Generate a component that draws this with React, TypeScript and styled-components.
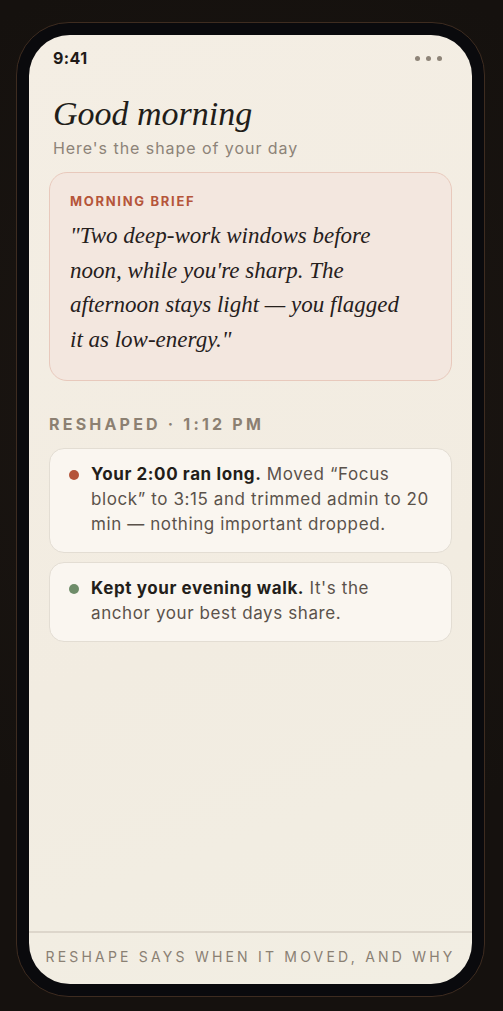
import styled, { createGlobalStyle } from 'styled-components';

const GlobalStyle = createGlobalStyle`
  html, body {
    margin: 0;
    padding: 0;
    background: radial-gradient(circle at 50% 40%, #1c1612 0%, #15110e 70%);
    min-height: 100%;
  }
  body {
    font-family: Inter, "Noto Sans", sans-serif;
  }
`

const Page = styled.div`
  padding: 22px 0 0 16px;
  min-height: 1011px;
  box-sizing: border-box;
`

const Phone = styled.div`
  width: 469px;
  height: 975px;
  box-sizing: border-box;
  padding: 12px;
  border-radius: 53px;
  border: 1px solid #3e2c20;
  background: #0a0a0d;
`

const Screen = styled.div`
  height: 100%;
  border-radius: 41px;
  overflow: hidden;
  background: linear-gradient(160deg, #f4eee4 0%, #f2ece1 60%, #f2eee3 100%);
  display: flex;
  flex-direction: column;
`

const StatusBar = styled.div`
  display: flex;
  justify-content: space-between;
  align-items: center;
  padding: 11px 30px 0 24px;
  height: 24px;
`

const Clock = styled.span`
  font-size: 16px;
  font-weight: 700;
  color: #1e1a17;
  letter-spacing: 0.4px;
`

const Dots = styled.div`
  display: flex;
  gap: 6px;
  span {
    width: 5px;
    height: 5px;
    border-radius: 50%;
    background: #8e8478;
  }
`

const Content = styled.div`
  flex: 1;
  padding: 0 20px;
  display: flex;
  flex-direction: column;
`

const Greeting = styled.h1`
  margin: 24px 0 0 4px;
  font-family: "Liberation Serif", "DejaVu Serif", serif;
  font-style: italic;
  font-weight: 400;
  font-size: 34px;
  line-height: 40px;
  color: #221d19;
`

const Subtitle = styled.p`
  margin: 4px 0 0 4px;
  font-size: 16px;
  line-height: 20px;
  letter-spacing: 0.95px;
  color: #8d8378;
`

const BriefCard = styled.section`
  margin-top: 14px;
  padding: 19px 20px 23px;
  border-radius: 18px;
  border: 1.5px solid #e8c9bc;
  background: #f3e7df;
`

const Eyebrow = styled.div<{ $tone: string }>`
  font-size: 13px;
  font-weight: 700;
  letter-spacing: 1.7px;
  line-height: 18px;
  text-transform: uppercase;
  color: ${props => props.$tone};
`

const Quote = styled.p`
  margin: 9px 0 0;
  font-family: "Liberation Serif", "DejaVu Serif", serif;
  font-style: italic;
  font-size: 23px;
  line-height: 34.5px;
  color: #26201c;
`

const SectionLabel = styled(Eyebrow)`
  margin: 33px 0 0;
  font-size: 16px;
  line-height: 20px;
  letter-spacing: 3.2px;
`

const Notes = styled.div`
  margin-top: 14px;
  display: flex;
  flex-direction: column;
  gap: 9px;
`

const Note = styled.div`
  display: flex;
  gap: 12px;
  padding: 13px 18px 15px 19px;
  border-radius: 15px;
  border: 1.5px solid #e3ddd3;
  background: #faf6f0;
`

const Dot = styled.span<{ $color: string }>`
  flex: none;
  width: 10px;
  height: 10px;
  margin-top: 8px;
  border-radius: 50%;
  background: ${props => props.$color};
`

const NoteText = styled.p`
  margin: 0;
  font-size: 17px;
  line-height: 25px;
  letter-spacing: 0.6px;
  color: #5a524b;
  b {
    font-weight: 700;
    color: #231e1a;
  }
`

const Footer = styled.footer`
  border-top: 2px solid #ddd6cb;
  padding: 15px 0 19px;
  text-align: center;
  font-size: 14px;
  letter-spacing: 3.2px;
  text-transform: uppercase;
  color: #8a8073;
  white-space: nowrap;
`

const briefLines = [
  '"Two deep-work windows before',
  "noon, while you're sharp. The",
  'afternoon stays light \u2014 you flagged',
  'it as low-energy."',
]

const notes = [
  {
    color: '#b4543a',
    lead: 'Your 2:00 ran long.',
    rest: ' Moved \u201cFocus block\u201d to 3:15 and trimmed admin to 20 min \u2014 nothing important dropped.',
  },
  {
    color: '#6e8c69',
    lead: 'Kept your evening walk.',
    rest: " It's the anchor your best days share.",
  },
]

function App() {
  return (
    <Page>
      <GlobalStyle />
      <Phone>
        <Screen>
          <StatusBar>
            <Clock>9:41</Clock>
            <Dots><span /><span /><span /></Dots>
          </StatusBar>
          <Content>
            <Greeting>Good morning</Greeting>
            <Subtitle>Here's the shape of your day</Subtitle>
            <BriefCard>
              <Eyebrow $tone="#b5553a">Morning brief</Eyebrow>
              <Quote>
                {briefLines.map((line, i) => (
                  <span key={i}>{line}{i < briefLines.length - 1 && <br />}</span>
                ))}
              </Quote>
            </BriefCard>
            <SectionLabel $tone="#8c8072">Reshaped · 1:12 PM</SectionLabel>
            <Notes>
              {notes.map(n => (
                <Note key={n.lead}>
                  <Dot $color={n.color} />
                  <NoteText><b>{n.lead}</b>{n.rest}</NoteText>
                </Note>
              ))}
            </Notes>
          </Content>
          <Footer>Reshape says when it moved, and why</Footer>
        </Screen>
      </Phone>
    </Page>
  );
}

export default App;
